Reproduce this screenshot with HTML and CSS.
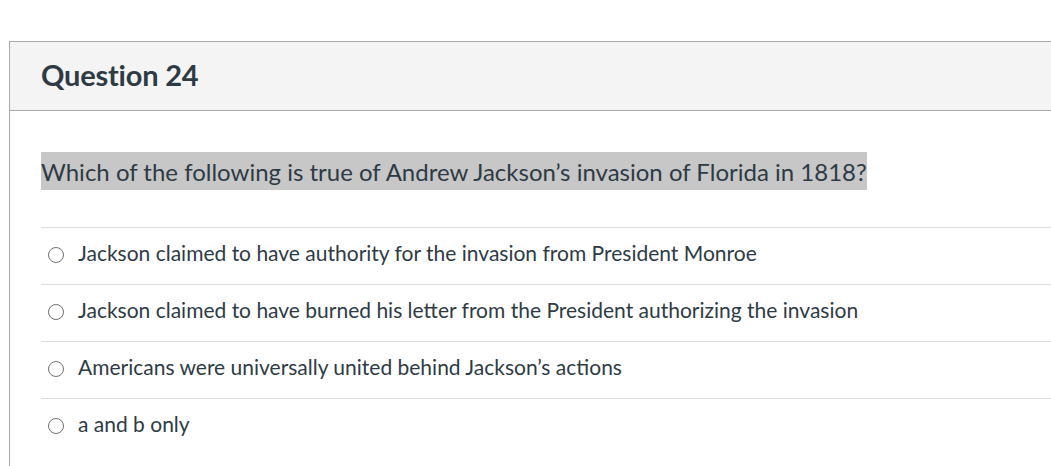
FILE: index.html
```html
<!DOCTYPE html>
<html>
<head>
<meta charset="utf-8">
<link rel="stylesheet" href="styles.css">
</head>
<body>
<div class="card">
  <div class="card-header">
    <h2 class="title">Question 24</h2>
  </div>
  <div class="card-body">
    <p class="question"><span class="hl">Which of the following is true of Andrew Jackson’s invasion of Florida in 1818?</span></p>
    <div class="answers">
      <label class="answer"><span class="radio"></span><span class="answer-text">Jackson claimed to have authority for the invasion from President Monroe</span></label>
      <label class="answer"><span class="radio"></span><span class="answer-text">Jackson claimed to have burned his letter from the President authorizing the invasion</span></label>
      <label class="answer"><span class="radio"></span><span class="answer-text">Americans were universally united behind Jackson’s actions</span></label>
      <label class="answer"><span class="radio"></span><span class="answer-text">a and b only</span></label>
    </div>
  </div>
</div>
</body>
</html>
```

FILE: styles.css
```css
html, body {
  margin: 0;
  padding: 0;
  background: #ffffff;
  overflow: hidden;
}
body {
  font-family: Lato, "Open Sans", sans-serif;
  color: #2d3b45;
}
.card {
  margin: 41px 0 0 9px;
  border-top: 1px solid #aaaaaa;
  border-left: 1px solid #aaaaaa;
}
.card-header {
  height: 68px;
  background: #f4f4f4;
  border-bottom: 1px solid #aaaaaa;
  display: flex;
  align-items: center;
  padding-left: 31px;
}
.title {
  margin: 0 0 3px 0;
  font-size: 29px;
  font-weight: 700;
  color: #2d3b45;
  letter-spacing: -0.2px;
}
.card-body {
  padding: 42px 0 11px 31px;
}
.question {
  margin: 0 0 37px 0;
  font-size: 24px;
  line-height: 37px;
}
.hl {
  background: #c7c7c7;
  padding: 5px 0 4px 0;
}
.answers {
  display: flex;
  flex-direction: column;
}
.answer {
  display: flex;
  align-items: center;
  gap: 14px;
  height: 56px;
  border-top: 1px solid #dddddd;
  padding-left: 7px;
  font-size: 21px;
}
.answer-text {
  margin-top: -7px;
}
.radio {
  width: 14px;
  height: 14px;
  border: 1px solid #6f6f6f;
  border-radius: 50%;
  flex: none;
  margin-top: -2px;
}
```
